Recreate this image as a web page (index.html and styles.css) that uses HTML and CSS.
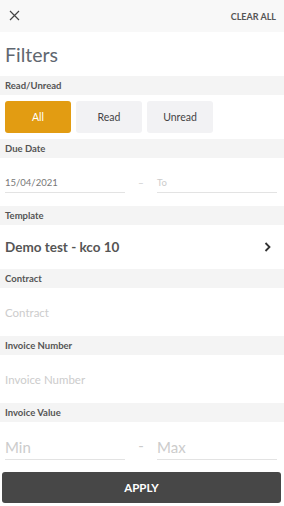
FILE: index.html
```html
<!DOCTYPE html>
<html lang="en">
<head>
  <meta charset="utf-8">
  <meta name="viewport" content="width=device-width, initial-scale=1.0">
  <title>Filters</title>
  <link rel="stylesheet" href="styles.css">
</head>
<body>

  <!-- Top bar -->
  <div class="topbar">
    <svg class="close" width="11" height="11" viewBox="0 0 11 11">
      <path d="M1 1 L10 10 M10 1 L1 10" stroke="#444" stroke-width="1.2" fill="none"/>
    </svg>
    <span class="clear">CLEAR ALL</span>
  </div>

  <h1 class="title">Filters</h1>

  <div class="band">Read/Unread</div>
  <div class="toggles">
    <button class="toggle active">All</button>
    <button class="toggle">Read</button>
    <button class="toggle">Unread</button>
  </div>

  <div class="band">Due Date</div>
  <div class="range">
    <div class="field date">15/04/2021</div>
    <span class="dash">–</span>
    <div class="field date empty">To</div>
  </div>

  <div class="band">Template</div>
  <div class="select">
    <span>Demo test - kco 10</span>
    <svg width="7" height="10" viewBox="0 0 7 10">
      <path d="M1.5 1 L5.5 5 L1.5 9" stroke="#333" stroke-width="1.8" fill="none"/>
    </svg>
  </div>

  <div class="band">Contract</div>
  <div class="text-row">Contract</div>

  <div class="band">Invoice Number</div>
  <div class="text-row">Invoice Number</div>

  <div class="band">Invoice Value</div>
  <div class="range value">
    <div class="field big">Min</div>
    <span class="dash">-</span>
    <div class="field big">Max</div>
  </div>

  <div class="footer">
    <button class="apply">APPLY</button>
  </div>

</body>
</html>
```

FILE: styles.css
```css
* {
  font-family: 'Lato', 'Liberation Sans', sans-serif;
  box-sizing: border-box;
}

body {
  margin: 0;
  width: 284px;
  background: #fff;
}

.topbar {
  height: 32px;
  background: #f8f8f8;
  display: flex;
  align-items: center;
  justify-content: space-between;
  padding: 0 8px 0 9px;
}

.close {
  display: block;
  margin-top: -2px;
}

.clear {
  font-size: 9px;
  font-weight: 700;
  color: #555;
}

.title {
  margin: 0;
  height: 44px;
  display: flex;
  align-items: center;
  padding-left: 5px;
  font-size: 19.5px;
  font-weight: 400;
  color: #5f6770;
}

.band {
  height: 19px;
  background: #f4f4f4;
  display: flex;
  align-items: center;
  padding-left: 5px;
  font-size: 9.5px;
  font-weight: 700;
  color: #555;
}

.toggles {
  height: 44px;
  display: flex;
  gap: 5px;
  padding: 6px 5px;
}

.toggle {
  width: 66px;
  height: 32px;
  border: none;
  border-radius: 3px;
  background: #f2f2f4;
  color: #444;
  font-size: 10.5px;
}

.toggle.active {
  background: #e29c12;
  color: #fff;
}

.range {
  height: 48px;
  display: flex;
  align-items: flex-end;
  padding: 0 7px 13px 5px;
}

.field {
  flex: 1;
  border-bottom: 1px solid #e3e3e3;
  padding-bottom: 4px;
}

.date {
  font-size: 9.5px;
  color: #777;
}

.date.empty {
  color: #ccc;
}

.dash {
  width: 32px;
  text-align: center;
  color: #ccc;
  font-size: 10px;
  padding-bottom: 5px;
}

.value {
  height: 44px;
  padding-bottom: 6px;
}

.big {
  font-size: 15px;
  color: #ccc;
  padding-bottom: 3px;
}

.value .dash {
  font-size: 15px;
  padding-bottom: 6px;
}

.select {
  height: 44px;
  display: flex;
  align-items: center;
  justify-content: space-between;
  padding: 0 13px 0 5px;
  font-size: 13.5px;
  font-weight: 700;
  color: #555;
}

.text-row {
  height: 48px;
  display: flex;
  align-items: center;
  padding-left: 5px;
  font-size: 11.5px;
  color: #ccc;
}

.footer {
  padding: 6px 3px 3px 2px;
}

.apply {
  width: 100%;
  height: 31px;
  border: none;
  border-radius: 3px;
  background: #474747;
  color: #fff;
  font-size: 11.5px;
  font-weight: 700;
}
```
